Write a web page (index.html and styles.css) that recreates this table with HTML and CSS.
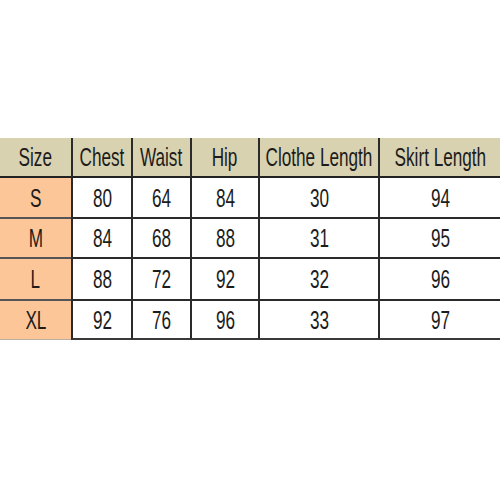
FILE: index.html
```html
<!DOCTYPE html>
<html>
<head>
<meta charset="utf-8">
<link rel="stylesheet" href="styles.css">
</head>
<body>
<div class="page">
  <div class="table">
    <div class="cell hd first"><span>Size</span></div>
    <div class="cell hd"><span>Chest</span></div>
    <div class="cell hd"><span>Waist</span></div>
    <div class="cell hd"><span>Hip</span></div>
    <div class="cell hd"><span>Clothe Length</span></div>
    <div class="cell hd last"><span>Skirt Length</span></div>

    <div class="cell sz"><span>S</span></div>
    <div class="cell"><span>80</span></div>
    <div class="cell"><span>64</span></div>
    <div class="cell"><span>84</span></div>
    <div class="cell"><span>30</span></div>
    <div class="cell last"><span>94</span></div>

    <div class="cell sz"><span>M</span></div>
    <div class="cell"><span>84</span></div>
    <div class="cell"><span>68</span></div>
    <div class="cell"><span>88</span></div>
    <div class="cell"><span>31</span></div>
    <div class="cell last"><span>95</span></div>

    <div class="cell sz"><span>L</span></div>
    <div class="cell"><span>88</span></div>
    <div class="cell"><span>72</span></div>
    <div class="cell"><span>92</span></div>
    <div class="cell"><span>32</span></div>
    <div class="cell last"><span>96</span></div>

    <div class="cell sz bottom"><span>XL</span></div>
    <div class="cell bottom"><span>92</span></div>
    <div class="cell bottom"><span>76</span></div>
    <div class="cell bottom"><span>96</span></div>
    <div class="cell bottom"><span>33</span></div>
    <div class="cell last bottom"><span>97</span></div>
  </div>
</div>
</body>
</html>
```
FILE: styles.css
```css
html, body {
  margin: 0;
  padding: 0;
  background: #ffffff;
  overflow: hidden;
}
.page {
  width: 500px;
  height: 500px;
  padding-top: 138px;
  box-sizing: border-box;
}
.table {
  display: grid;
  grid-template-columns: 71px 60px 59px 68px 120px 122px;
  grid-template-rows: 40px 41px 40px 42px 39px;
  width: 500px;
  font-family: "Liberation Sans", Arial, sans-serif;
  font-size: 26px;
  color: #1c1c1c;
}
.cell {
  display: flex;
  align-items: center;
  justify-content: center;
  border-left: 2px solid #2a2a2a;
  border-bottom: 2px solid #2a2a2a;
  background: #ffffff;
  white-space: nowrap;
  overflow: visible;
}
.cell span {
  display: inline-block;
  transform: scaleX(0.66);
  line-height: 1;
}
.cell.bottom {
  border-bottom-color: #3a3a3a;
}
.hd {
  background: #d8d2b1;
  border-bottom: 2px solid #222222;
}
.hd.first {
  border-left: none;
}
.sz {
  background: #fcc698;
  border-left: none;
  border-bottom-color: #555555;
}
.sz.bottom {
  border-bottom: 1px solid #b9b0a4;
}
```
